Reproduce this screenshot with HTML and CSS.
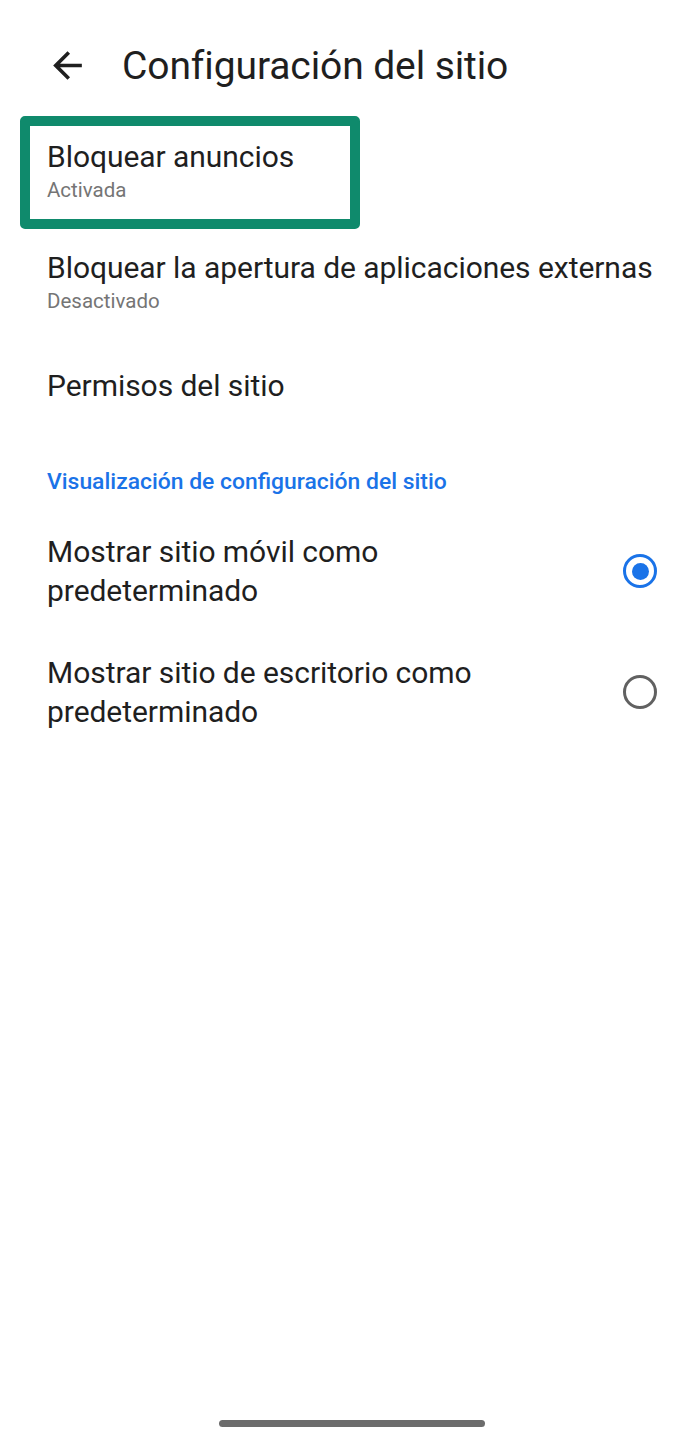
FILE: index.html
```html
<!DOCTYPE html>
<html lang="es">
<head>
<meta charset="utf-8">
<title>Configuración del sitio</title>
<link rel="stylesheet" href="styles.css">
</head>
<body>
<div class="screen">
  <div class="statusbar"></div>
  <header class="toolbar">
    <svg class="back" viewBox="0 0 24 24" aria-hidden="true"><path d="M20 11H7.83l5.59-5.59L12 4l-8 8 8 8 1.41-1.41L7.83 13H20v-2z"/></svg>
    <h1 class="title">Configuración del sitio</h1>
  </header>
  <main class="list">
    <div class="highlight">
      <div class="item">
        <div class="item-title">Bloquear anuncios</div>
        <div class="item-sub">Activada</div>
      </div>
    </div>
    <div class="item item-2">
      <div class="item-title">Bloquear la apertura de aplicaciones externas</div>
      <div class="item-sub">Desactivado</div>
    </div>
    <div class="item item-3">
      <div class="item-title">Permisos del sitio</div>
    </div>
    <div class="section-header">Visualización de configuración del sitio</div>
    <div class="radio-row radio-row-1">
      <div class="item-title">Mostrar sitio móvil como<br>predeterminado</div>
      <span class="radio checked"></span>
    </div>
    <div class="radio-row radio-row-2">
      <div class="item-title">Mostrar sitio de escritorio como<br>predeterminado</div>
      <span class="radio"></span>
    </div>
  </main>
  <div class="navbar"><span class="handle"></span></div>
</div>
</body>
</html>
```
FILE: styles.css
```css
* { box-sizing: border-box; }
html, body { margin: 0; padding: 0; background: #ffffff; }
body { font-family: Roboto, "Noto Sans", sans-serif; color: #1f1f1f; }

.screen {
  display: flex;
  flex-direction: column;
  min-height: 1439px;
}

.statusbar { height: 22px; }

.toolbar {
  height: 88px;
  display: flex;
  align-items: center;
  padding-left: 46px;
}
.back { width: 43px; height: 43px; fill: #1f1f1f; margin-top: -2px; }
.title {
  margin: 0 0 0 33px;
  font-size: 39px;
  font-weight: 400;
  line-height: 46px;
  letter-spacing: -0.1px;
  color: #1f1f1f;
}

.list { display: flex; flex-direction: column; }

.highlight {
  align-self: flex-start;
  margin: 6px 0 0 20px;
  border: 10px solid #0f8a6c;
  border-radius: 5px;
  padding: 11px 56px 15px 17px;
}
.highlight .item { padding: 0; }

.item { padding-left: 47px; }
.item-title {
  font-size: 30px;
  line-height: 39px;
  letter-spacing: -0.05px;
  color: #1f1f1f;
}
.item-sub {
  font-size: 20.5px;
  line-height: 28px;
  color: #757575;
}
.item-2 { margin-top: 19px; }
.item-3 { margin-top: 51px; }

.section-header {
  margin-top: 62px;
  padding-left: 47px;
  font-size: 22.9px;
  font-weight: 500;
  line-height: 30px;
  color: #1a73e8;
}

.radio-row {
  display: flex;
  align-items: center;
  justify-content: space-between;
  padding: 0 30px 0 47px;
}
.radio-row-1 { margin-top: 35px; }
.radio-row-2 { margin-top: 43px; }

.radio {
  width: 34px;
  height: 34px;
  border-radius: 50%;
  border: 3.5px solid #616161;
  display: flex;
  align-items: center;
  justify-content: center;
  flex-shrink: 0;
}
.radio.checked { border-color: #1a73e8; }
.radio.checked::after {
  content: "";
  width: 17px;
  height: 17px;
  border-radius: 50%;
  background: #1a73e8;
}

.navbar {
  margin-top: auto;
  height: 19px;
  padding-left: 16px;
  display: flex;
  justify-content: center;
  align-items: flex-start;
}
.handle {
  width: 266px;
  height: 7px;
  border-radius: 4px;
  background: #6c6c6c;
}
```
